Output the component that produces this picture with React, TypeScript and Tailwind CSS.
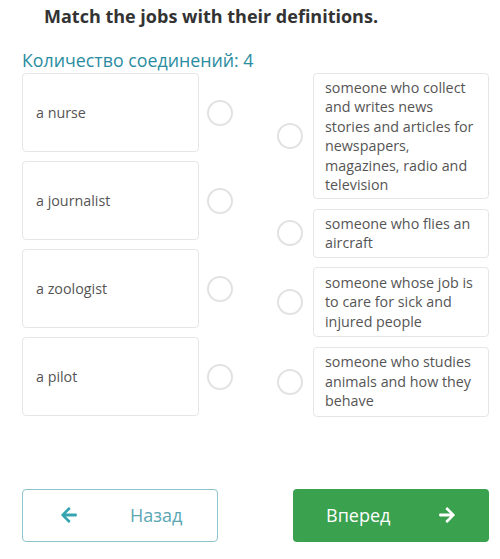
import { FaArrowLeft, FaArrowRight } from "react-icons/fa";

const jobs = ["a nurse", "a journalist", "a zoologist", "a pilot"];

const definitions = [
  { text: "someone who collect and writes news stories and articles for newspapers, magazines, radio and television", h: "h-[126px]" },
  { text: "someone who flies an aircraft", h: "h-[49px]" },
  { text: "someone whose job is to care for sick and injured people", h: "h-[70px]" },
  { text: "someone who studies animals and how they behave", h: "h-[70px]" },
];

function Dot() {
  return <span className="block h-[26px] w-[26px] shrink-0 rounded-full border-2 border-[#e2e2e2] bg-white" />;
}

export default function App() {
  return (
    <main className="h-[559px] w-[500px] overflow-hidden bg-white pl-[22px] pr-[11px] text-[#555]" style={{ fontFamily: '"Open Sans", sans-serif' }}>
      <h1 className="pl-[22px] pt-[4px] text-[18px] font-bold leading-[24px] text-[#333]">
        Match the jobs with their definitions.
      </h1>
      <p className="mt-[20px] text-[17.8px] leading-[24px] text-[#2a8ca0]">Количество соединений: 4</p>

      <div className="mt-[1px] flex gap-[44px]">
        <div className="flex w-[211px] flex-col gap-[9px]">
          {jobs.map((job) => (
            <div key={job} className="flex items-center gap-[8px]">
              <div className="flex h-[79px] w-[177px] items-center rounded-[4px] border border-[#e6e6e6] px-[13px] text-[14.3px]">
                {job}
              </div>
              <Dot />
            </div>
          ))}
        </div>
        <div className="flex w-[212px] flex-col gap-[9.5px]">
          {definitions.map((d) => (
            <div key={d.text} className="flex items-center gap-[10px]">
              <Dot />
              <div className={`flex ${d.h} w-[176px] items-center rounded-[4px] border border-[#e6e6e6] px-[11px] text-[14.3px] leading-[19.5px]`}>
                {d.text}
              </div>
            </div>
          ))}
        </div>
      </div>

      <div className="mt-[72px] flex justify-between">
        <button className="flex h-[53px] w-[196px] items-center rounded-[4px] border border-[#8cc3cc] pl-[37px] text-[18px] text-[#5aa7b3]">
          <FaArrowLeft className="text-[18px] text-[#35a6b0]" />
          <span className="ml-[52px]">Назад</span>
        </button>
        <button className="flex h-[53px] w-[196px] items-center rounded-[4px] bg-[#3aa14f] pl-[33px] text-[18px] text-white">
          <span>Вперед</span>
          <FaArrowRight className="ml-[48px] text-[18px]" />
        </button>
      </div>
    </main>
  );
}
